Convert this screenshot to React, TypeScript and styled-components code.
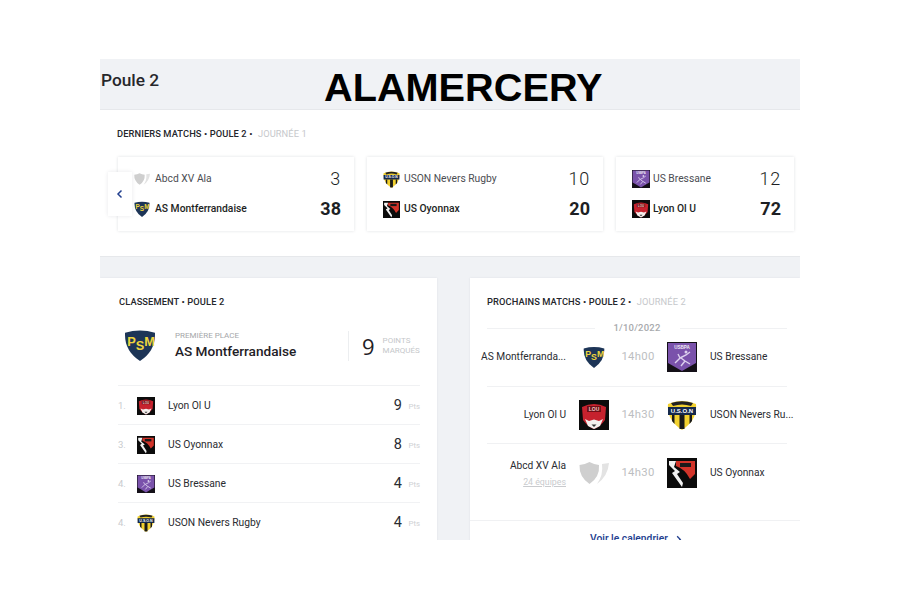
import React from "react";
import styled, { createGlobalStyle } from "styled-components";

const Global = createGlobalStyle`
  html, body { margin: 0; padding: 0; background: #fff; }
  body { font-family: Roboto, "Liberation Sans", sans-serif; }
  * { box-sizing: border-box; }
`;

type TeamKey = "asm" | "lyon" | "oyo" | "bress" | "uson" | "none";

const Svg = styled.svg<{ $size: number }>`
  width: ${(p) => p.$size}px;
  height: ${(p) => p.$size}px;
  flex: none;
  display: block;
`;

const Crest: React.FC<{ team: TeamKey; size: number }> = ({ team, size }) => {
  if (team === "asm")
    return (
      <Svg $size={size} viewBox="0 0 30 30">
        <path d="M1 3.500 Q15 -0.500 29 3.500 Q30 20 15 30 Q0 20 1 3.500Z" fill="#1d3557" />
        <text x="3" y="15.500" fill="#efd43d" fontFamily="Liberation Sans, sans-serif" fontWeight="700" fontSize="12">
          <tspan>P</tspan>
          <tspan dy="4">S</tspan>
          <tspan dy="-4">M</tspan>
        </text>
      </Svg>
    );
  if (team === "lyon")
    return (
      <Svg $size={size} viewBox="0 0 30 30">
        <rect width="30" height="30" fill="#0c0c0c" />
        <path d="M3 7 Q15 1 27 7 L26 20 Q21 27 15 29 Q9 27 4 20Z" fill="#c6222e" />
        <rect x="8" y="6" width="14" height="6" fill="#6e1017" />
        <text x="15" y="11" textAnchor="middle" fontSize="5" fontWeight="700" fontFamily="Liberation Sans, sans-serif" fill="#f2c9c9">LOU</text>
        <path d="M6 19 L10 21 L15 19.500 L20 21 L24 19 L21 26 L15 29 L9 26Z" fill="#f4f0ee" />
        <path d="M12.500 24.500h5l-2.500 2.500z" fill="#333" />
      </Svg>
    );
  if (team === "oyo")
    return (
      <Svg $size={size} viewBox="0 0 30 30">
        <rect width="30" height="30" fill="#0b0b0b" />
        <path d="M2 3 L9 3 L7 9 L13 14 L10 16 L16 25 L15 29 L5 15 L8 13 L2 7Z" fill="#f2f2f2" />
        <path d="M9 3 H28 V16 L23 21 Q18 11 9 8Z" fill="#d2342a" />
        <path d="M13 5 H24 V9 H13Z" fill="#1a1a1a" />
      </Svg>
    );
  if (team === "bress")
    return (
      <Svg $size={size} viewBox="0 0 30 30">
        <rect width="30" height="30" fill="#141018" />
        <path d="M1 1 H29 V21 Q22 25 15 29 Q8 25 1 21Z" fill="#7a52ab" />
        <text x="15" y="6.500" textAnchor="middle" fontSize="4.600" fontWeight="700" fontFamily="Liberation Sans, sans-serif" fill="#efeaf6">USBPA</text>
        <path d="M8 21 L13 16 L11 12 M13 16 L19 13 L23 10 M14 16 L18 19 L23 22 M18 19 L14 24" fill="none" stroke="#dcd0ee" strokeWidth="1.400" />
        <circle cx="19" cy="10" r="1.500" fill="#dcd0ee" />
      </Svg>
    );
  if (team === "uson")
    return (
      <Svg $size={size} viewBox="0 0 30 30">
        <path d="M1 4 Q15 -2 29 4 Q30.500 20 15 30 Q-0.500 20 1 4Z" fill="#f2d12f" />
        <path d="M4 3 Q15 -0.500 26 3 L24 6 Q15 3 6 6Z" fill="#222" />
        <path d="M1 7 H29 V15 H1Z" fill="#16294b" />
        <text x="15" y="13" textAnchor="middle" fontSize="6" fontWeight="700" fontFamily="Liberation Sans, sans-serif" fill="#fff">U.S.O.N</text>
        <rect x="12.500" y="15" width="5" height="14" fill="#1a1a1a" />
        <path d="M5 15h2.500v9l-2.500-3z M22.500 15h2.500v6l-2.500 3z" fill="#1a1a1a" />
      </Svg>
    );
  return (
    <Svg $size={size} viewBox="0 0 30 30">
      <path d="M0.500 7 Q6 6.500 10.500 4 Q15 6.500 20 7 Q21 19 10.500 26 Q0 19 0.500 7Z" fill="#cfcfcf" />
      <path d="M23 6 L30 5 Q29 18 18 26 Q24.500 17 23 6Z" fill="#e3e3e3" />
    </Svg>
  );
};

const Stage = styled.div`
  position: relative;
  margin: 59px 0 0 100px;
  width: 700px;
  height: 481px;
  overflow: hidden;
  background: #f0f2f5;
`;

const Header = styled.header`
  height: 51px;
  padding: 10px 0 0 1px;
  border-bottom: 1px solid #e6e8eb;
`;

const PageTitle = styled.h1`
  margin: 0;
  font: 500 17.300px/22px Roboto, sans-serif;
  color: #26272b;
`;

const Stamp = styled.div`
  position: absolute;
  left: 224px;
  top: 5px;
  font: 700 39.700px/46px "Liberation Sans", Arial, sans-serif;
  color: #000;
  white-space: nowrap;
`;

const Recent = styled.section`
  position: relative;
  height: 147px;
  padding: 18px 0 0 17px;
  background: #fff;
  border-bottom: 1px solid #e6e8eb;
`;

const SectionTitle = styled.h2`
  margin: 0;
  font: 500 9.300px/12px Roboto, sans-serif;
  letter-spacing: 0.1px;
  text-transform: uppercase;
  color: #24262b;
  white-space: nowrap;
`;

const Faded = styled.span`
  font-weight: 400;
  color: #c6c8cb;
  margin-left: 3px;
`;

const Carousel = styled.div`
  display: grid;
  grid-template-columns: 236px 236px 178px;
  gap: 13px;
  margin: 17px 0 0 1px;
`;

const ScoreCard = styled.article`
  height: 74px;
  padding: 7px 13px 7px 16px;
  background: #fff;
  box-shadow: 0 0 3px rgba(30, 40, 60, 0.14);
`;

const ScoreRow = styled.div<{ $gap: number }>`
  height: 30px;
  display: flex;
  align-items: center;
  gap: ${(p) => p.$gap}px;
`;

const ScoreName = styled.span<{ $win?: boolean }>`
  flex: 1;
  font: ${(p) => (p.$win ? 500 : 400)} 10.300px/14px Roboto, sans-serif;
  color: ${(p) => (p.$win ? "#1d1f24" : "#4b4d52")};
  white-space: nowrap;
`;

const ScoreValue = styled.span<{ $win?: boolean }>`
  font: ${(p) => (p.$win ? 700 : 300)} 18px/20px Roboto, sans-serif;
  letter-spacing: ${(p) => (p.$win ? 0 : 0.8)}px;
  color: #1d1f24;
`;

const ArrowButton = styled.button`
  position: absolute;
  left: 8px;
  top: 62px;
  width: 24px;
  height: 44px;
  padding: 0;
  border: 0;
  background: #fff;
  box-shadow: 0 0 4px rgba(30, 40, 60, 0.1);
  display: flex;
  align-items: center;
  justify-content: center;
`;

const Lower = styled.div`
  display: grid;
  grid-template-columns: 337px 1fr;
  gap: 33px;
  margin-top: 21px;
`;

const Panel = styled.section`
  height: 300px;
  background: #fff;
  box-shadow: 0 0 2px rgba(30, 40, 60, 0.08);
  overflow: hidden;
`;

const StandingsPanel = styled(Panel)`
  padding: 18px 17px 0 18px;
`;

const StandingsTitle = styled(SectionTitle)`
  padding-left: 1px;
`;

const Leader = styled.div`
  height: 76px;
  margin-top: 2px;
  padding: 19px 0 0 6px;
  display: flex;
  align-items: flex-start;
  border-bottom: 1px solid #f0f1f3;
`;

const LeaderInfo = styled.div`
  margin: 2px 0 0 19px;
  width: 173px;
`;

const LeaderLabel = styled.div`
  font: 400 8px/10px Roboto, sans-serif;
  text-transform: uppercase;
  color: #a4a6a9;
`;

const LeaderName = styled.div`
  margin-top: 1px;
  font: 500 13.600px/18px Roboto, sans-serif;
  color: #1f2126;
`;

const LeaderScore = styled.div`
  height: 30px;
  margin-top: 2px;
  padding-left: 13px;
  display: flex;
  align-items: center;
  gap: 8px;
  border-left: 1px solid #eceef0;
`;

const LeaderPoints = styled.span`
  font: 400 22px/24px "Open Sans", Roboto, sans-serif;
  color: #1f2126;
`;

const LeaderUnit = styled.span`
  font: 400 8px/10px Roboto, sans-serif;
  text-transform: uppercase;
  color: #c5c7ca;
`;

const RankRow = styled.div`
  height: 39px;
  padding-top: 1px;
  display: flex;
  align-items: center;
  border-bottom: 1px solid #f1f2f4;
`;

const RankNo = styled.span`
  width: 19px;
  font: 400 9.500px/12px Roboto, sans-serif;
  color: #c9cbce;
`;

const RankName = styled.span`
  flex: 1;
  margin-left: 13px;
  font: 400 10.300px/14px Roboto, sans-serif;
  color: #2a2c31;
`;

const RankPoints = styled.span`
  font: 400 14.500px/16px Roboto, sans-serif;
  color: #2a2c31;
`;

const RankUnit = styled.span`
  width: 18px;
  margin-top: 3px;
  text-align: right;
  font: 400 7.800px/10px Roboto, sans-serif;
  color: #cfd1d4;
`;

const FixturesPanel = styled(Panel)`
  padding-top: 18px;
`;

const FixturesTitle = styled(SectionTitle)`
  padding-left: 17px;
`;

const DateLine = styled.div`
  margin: 15px 13px 0 17px;
  display: flex;
  align-items: center;
  gap: 19px;
  font: 500 9.500px/10px Roboto, sans-serif;
  letter-spacing: 0.2px;
  color: #a8aaad;
  &::before, &::after {
    content: "";
    flex: 1;
    height: 1px;
    background: #f0f1f3;
  }
`;

const Fixture = styled.div<{ $h: number; $lift?: number }>`
  height: ${(p) => p.$h}px;
  padding: 0 0 ${(p) => p.$lift ?? 0}px 13px;
  display: grid;
  grid-template-columns: 83px 43px 58px 30px 1fr;
  align-items: center;
`;

const Home = styled.div`
  min-width: 0;
  display: flex;
  flex-direction: column;
  align-items: flex-end;
`;

const HomeName = styled.div`
  font: 400 10.200px/14px Roboto, sans-serif;
  color: #2a2c31;
  white-space: nowrap;
`;

const TeamCount = styled.div`
  margin-top: 3px;
  font: 400 8.800px/12px Roboto, sans-serif;
  color: #c9cbce;
  text-decoration: underline;
`;

const HomeCrest = styled.div`
  padding-left: 13px;
  display: flex;
  justify-content: center;
`;

const Kickoff = styled.div`
  text-align: center;
  font: 400 11.300px/14px Roboto, sans-serif;
  letter-spacing: 0.3px;
  color: #bcbec1;
`;

const AwayName = styled.div`
  margin-left: 13px;
  font: 400 10.200px/14px Roboto, sans-serif;
  color: #2a2c31;
  white-space: nowrap;
`;

const Rule = styled.hr`
  margin: 0 13px 0 17px;
  border: 0;
  height: 1px;
  background: #f0f1f3;
`;

const PanelFoot = styled.footer`
  margin-top: 18px;
  padding-top: 11px;
  border-top: 1px solid #f0f1f3;
  padding-left: 120px;
  font: 500 10.300px/14px Roboto, sans-serif;
  color: #23408f;
  display: flex;
  align-items: center;
  gap: 6px;
`;

const Chevron: React.FC<{ size: number; dir: "l" | "r" }> = ({ size, dir }) => (
  <svg width={size} height={size} viewBox="0 0 10 10" fill="none" stroke="#23408f" strokeWidth="1.500">
    <path d={dir === "l" ? "M6.500 1.500 L3 5 L6.500 8.500" : "M3.500 1.500 L7 5 L3.500 8.500"} />
  </svg>
);

const results: { size: number; a: [TeamKey, string, number]; b: [TeamKey, string, number] }[] = [
  { size: 16, a: ["none", "Abcd XV Ala", 3], b: ["asm", "AS Montferrandaise", 38] },
  { size: 17, a: ["uson", "USON Nevers Rugby", 10], b: ["oyo", "US Oyonnax", 20] },
  { size: 18, a: ["bress", "US Bressane", 12], b: ["lyon", "Lyon Ol U", 72] },
];

const ranks: [string, TeamKey, string, number][] = [
  ["1.", "lyon", "Lyon Ol U", 9],
  ["3.", "oyo", "US Oyonnax", 8],
  ["4.", "bress", "US Bressane", 4],
  ["4.", "uson", "USON Nevers Rugby", 4],
];

export default function App() {
  return (
    <>
      <Global />
      <Stage>
        <Header>
          <PageTitle>Poule 2</PageTitle>
        </Header>
        <Stamp>ALAMERCERY</Stamp>
        <Recent>
          <SectionTitle>
            Derniers matchs • Poule 2 • <Faded>Journée 1</Faded>
          </SectionTitle>
          <Carousel>
            {results.map((m) => (
              <ScoreCard key={m.a[1]}>
                <ScoreRow $gap={21 - m.size}>
                  <Crest team={m.a[0]} size={m.size} />
                  <ScoreName>{m.a[1]}</ScoreName>
                  <ScoreValue>{m.a[2]}</ScoreValue>
                </ScoreRow>
                <ScoreRow $gap={21 - m.size}>
                  <Crest team={m.b[0]} size={m.size} />
                  <ScoreName $win>{m.b[1]}</ScoreName>
                  <ScoreValue $win>{m.b[2]}</ScoreValue>
                </ScoreRow>
              </ScoreCard>
            ))}
          </Carousel>
          <ArrowButton aria-label="Précédent">
            <Chevron size={10} dir="l" />
          </ArrowButton>
        </Recent>
        <Lower>
          <StandingsPanel>
            <StandingsTitle>Classement • Poule 2</StandingsTitle>
            <Leader>
              <Crest team="asm" size={32} />
              <LeaderInfo>
                <LeaderLabel>Première place</LeaderLabel>
                <LeaderName>AS Montferrandaise</LeaderName>
              </LeaderInfo>
              <LeaderScore>
                <LeaderPoints>9</LeaderPoints>
                <LeaderUnit>
                  Points
                  <br />
                  marqués
                </LeaderUnit>
              </LeaderScore>
            </Leader>
            {ranks.map((r) => (
              <RankRow key={r[2]}>
                <RankNo>{r[0]}</RankNo>
                <Crest team={r[1]} size={18} />
                <RankName>{r[2]}</RankName>
                <RankPoints>{r[3]}</RankPoints>
                <RankUnit>Pts</RankUnit>
              </RankRow>
            ))}
          </StandingsPanel>
          <FixturesPanel>
            <FixturesTitle>
              Prochains matchs • Poule 2 • <Faded>Journée 2</Faded>
            </FixturesTitle>
            <DateLine>1/10/2022</DateLine>
            <Fixture $h={53} $lift={6}>
              <Home><HomeName>AS Montferranda...</HomeName></Home>
              <HomeCrest><Crest team="asm" size={22} /></HomeCrest>
              <Kickoff>14h00</Kickoff>
              <Crest team="bress" size={30} />
              <AwayName>US Bressane</AwayName>
            </Fixture>
            <Rule />
            <Fixture $h={56}>
              <Home><HomeName>Lyon Ol U</HomeName></Home>
              <HomeCrest><Crest team="lyon" size={30} /></HomeCrest>
              <Kickoff>14h30</Kickoff>
              <Crest team="uson" size={30} />
              <AwayName>USON Nevers Ru...</AwayName>
            </Fixture>
            <Rule />
            <Fixture $h={58}>
              <Home>
                <HomeName>Abcd XV Ala</HomeName>
                <TeamCount>24 équipes</TeamCount>
              </Home>
              <HomeCrest><Crest team="none" size={30} /></HomeCrest>
              <Kickoff>14h30</Kickoff>
              <Crest team="oyo" size={30} />
              <AwayName>US Oyonnax</AwayName>
            </Fixture>
            <PanelFoot>
              Voir le calendrier <Chevron size={9} dir="r" />
            </PanelFoot>
          </FixturesPanel>
        </Lower>
      </Stage>
    </>
  );
}
